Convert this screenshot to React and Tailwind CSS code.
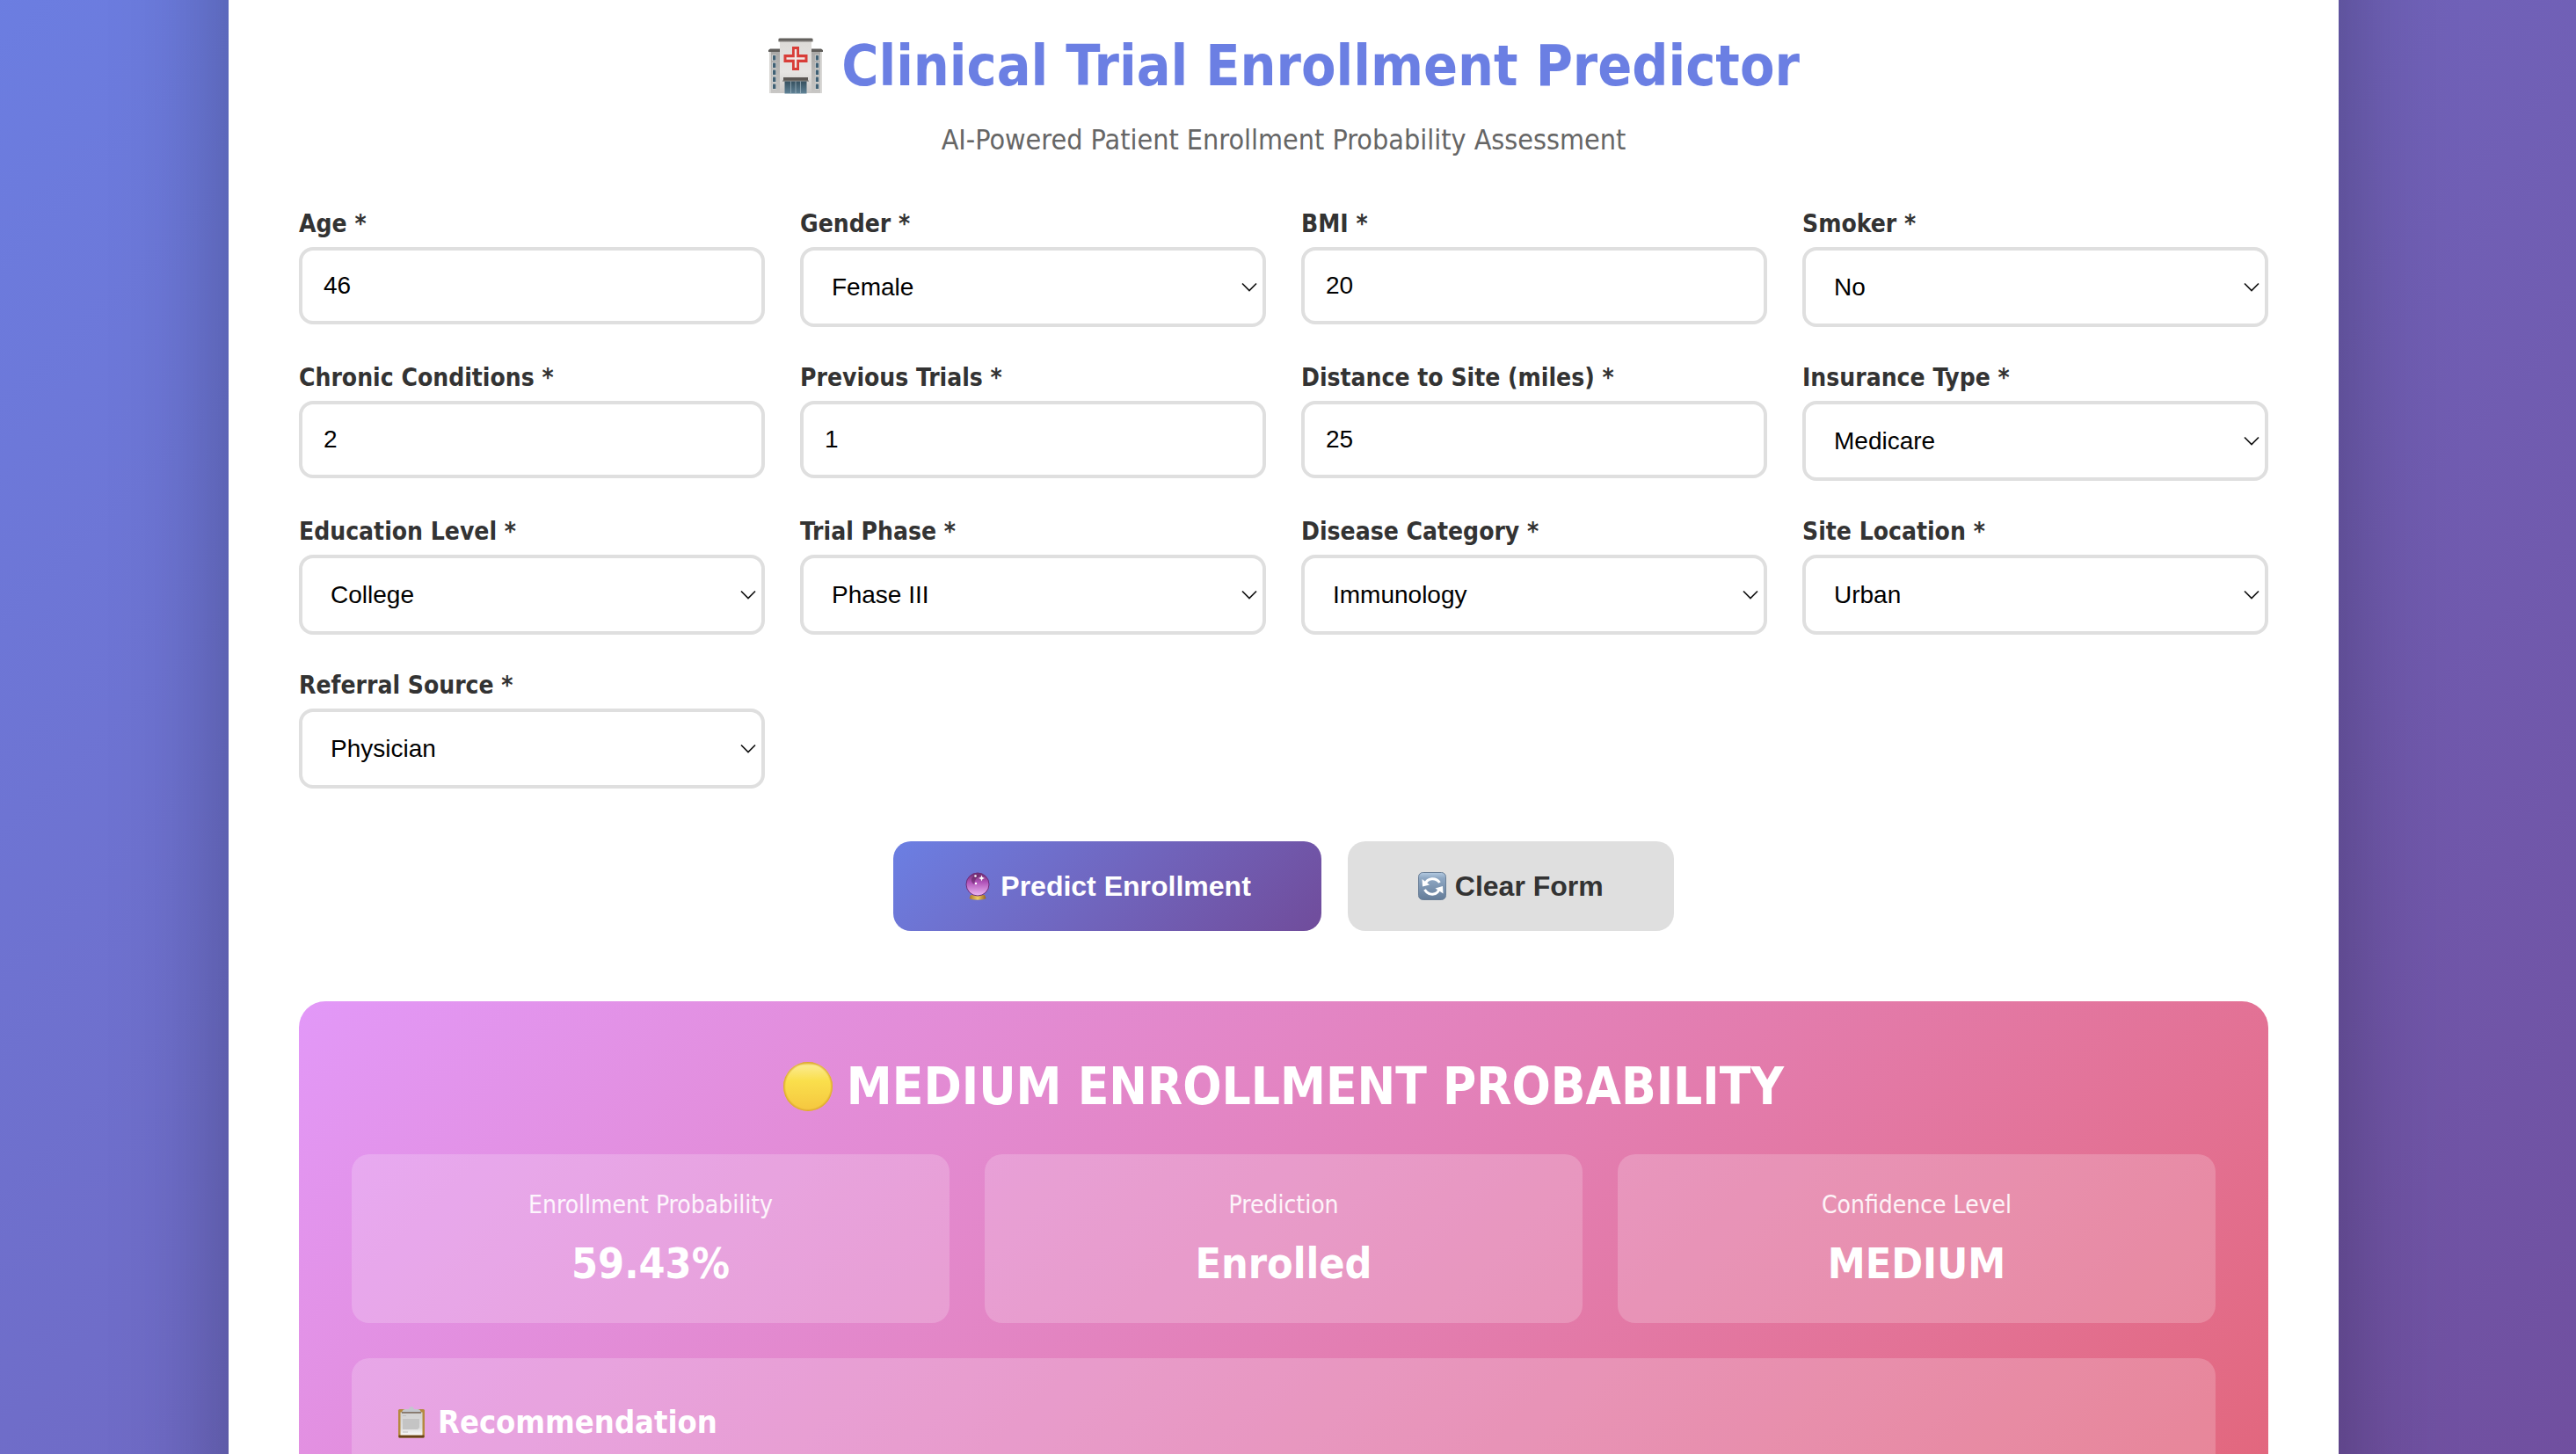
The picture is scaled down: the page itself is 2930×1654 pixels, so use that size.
import React from "react";

const fields = [
  { id: "age", label: "Age *", value: "46" },
  { id: "gender", label: "Gender *", options: ["Female", "Male"] },
  { id: "bmi", label: "BMI *", value: "20" },
  { id: "smoker", label: "Smoker *", options: ["No", "Yes"] },
  { id: "chronic", label: "Chronic Conditions *", value: "2" },
  { id: "previous", label: "Previous Trials *", value: "1" },
  { id: "distance", label: "Distance to Site (miles) *", value: "25" },
  { id: "insurance", label: "Insurance Type *", options: ["Medicare", "Medicaid", "Private"] },
  { id: "education", label: "Education Level *", options: ["College", "High School", "Graduate"] },
  { id: "phase", label: "Trial Phase *", options: ["Phase III", "Phase II", "Phase I"] },
  { id: "disease", label: "Disease Category *", options: ["Immunology", "Oncology", "Cardiology"] },
  { id: "site", label: "Site Location *", options: ["Urban", "Suburban", "Rural"] },
  { id: "referral", label: "Referral Source *", options: ["Physician", "Online", "Advertisement"] },
];

const stats = [
  { label: "Enrollment Probability", value: "59.43%" },
  { label: "Prediction", value: "Enrolled" },
  { label: "Confidence Level", value: "MEDIUM" },
];

function Hospital() {
  const rows = [18.5, 27, 35, 43, 51];
  return (
    <svg className="h-16 w-16 shrink-0" viewBox="0 0 64 64" aria-hidden="true">
      <defs>
        <linearGradient id="wall" x1="0" y1="0" x2="0" y2="1">
          <stop offset="0" stopColor="#dcdad7" />
          <stop offset="0.6" stopColor="#e6e4e2" />
          <stop offset="1" stopColor="#c9c7c5" />
        </linearGradient>
        <linearGradient id="wing" x1="0" y1="0" x2="0" y2="1">
          <stop offset="0" stopColor="#a9a8a6" />
          <stop offset="1" stopColor="#c8c7c5" />
        </linearGradient>
        <linearGradient id="pane" x1="0" y1="0" x2="0" y2="1">
          <stop offset="0" stopColor="#36505f" />
          <stop offset="1" stopColor="#5f8296" />
        </linearGradient>
      </defs>
      <path d="M2 15H14V63H2ZM50 15H62V63H50Z" fill="url(#wing)" />
      <path d="M2 16H4V63H2ZM60 16H62V63H60Z" fill="#d9d8d6" />
      <path d="M1 14L3 12.5H14V16H1ZM63 14L61 12.5H50V16H63Z" fill="#5f5d5a" />
      {rows.map((y) => (
        <g key={y}>
          <rect x="5" y={y + 1} width="5" height="6.6" fill="#dad9d7" />
          <rect x="6" y={y + 1.6} width="3.4" height="5.4" fill="#3f6074" />
          <rect x="54" y={y + 1} width="5" height="6.6" fill="#dad9d7" />
          <rect x="54.8" y={y + 1.6} width="3.4" height="5.4" fill="#3f6074" />
        </g>
      ))}
      <rect x="14" y="3" width="36" height="60" fill="url(#wall)" />
      <path d="M12.5 1L14 0.4H50L51.5 1V4H12.5Z" fill="#63605d" />
      <rect x="12.5" y="3.4" width="39" height="1.2" fill="#8d8a86" />
      <path d="M28 10H36V19H45.500V28H36V37H28V28H18.500V19H28Z" fill="#d83d38" />
      <path d="M30.800 13H33.200V22.200H42.500V24.800H33.200V34H30.800V24.800H21.500V22.200H30.800Z" fill="#f1e9e6" />
      <rect x="18" y="45" width="28" height="4" fill="#5c5855" />
      <rect x="17" y="48.500" width="30" height="1.200" fill="#84817e" />
      <rect x="19.500" y="49.500" width="25" height="14" fill="url(#pane)" />
      <path d="M26.500 49.500V63.500M32 49.500V63.500M37.500 49.500V63.500" stroke="#a9bcc6" strokeWidth="0.700" />
    </svg>
  );
}

function CrystalBall() {
  return (
    <svg className="h-8 w-8 shrink-0" viewBox="0 0 32 32" aria-hidden="true">
      <defs>
        <linearGradient id="orb" x1="0" y1="0" x2="0" y2="1">
          <stop offset="0" stopColor="#6d2c6c" />
          <stop offset="0.4" stopColor="#b052b8" />
          <stop offset="1" stopColor="#edb9f5" />
        </linearGradient>
        <linearGradient id="stand" x1="0" y1="0" x2="1" y2="0">
          <stop offset="0" stopColor="#a8742a" />
          <stop offset="0.5" stopColor="#f0cf62" />
          <stop offset="1" stopColor="#96621f" />
        </linearGradient>
      </defs>
      <path d="M8 26H24L25.500 30C22 32.300 10 32.300 6.500 30Z" fill="url(#stand)" />
      <circle cx="16" cy="14" r="13" fill="url(#orb)" stroke="#6c2a78" strokeWidth="1" />
      <path d="M9 8C11 4 16 2.500 19 4C14 6 13 10 12 14C10 13 8.500 11 9 8Z" fill="#4b1a4c" opacity="0.450" />
      <circle cx="13.500" cy="4.500" r="1.300" fill="#fff" />
      <path d="M20.500 3.500L21.500 6L24 7L21.500 8L20.500 10.500L19.500 8L17 7L19.500 6Z" fill="#fff" />
      <circle cx="14" cy="13" r="1.200" fill="#fff" />
    </svg>
  );
}

function Refresh() {
  return (
    <svg className="h-8 w-8 shrink-0" viewBox="0 0 32 32" aria-hidden="true">
      <defs>
        <linearGradient id="tile" x1="0" y1="0" x2="0" y2="1">
          <stop offset="0" stopColor="#b4cbe2" />
          <stop offset="0.200" stopColor="#8fa8c4" />
          <stop offset="1" stopColor="#647c98" />
        </linearGradient>
      </defs>
      <rect x="0.500" y="0.500" width="31" height="31" rx="5" fill="url(#tile)" stroke="#6a7f97" strokeWidth="1" />
      <path d="M8 13.500C10.500 6.500 20 5.500 24.500 12" fill="none" stroke="#fff" strokeWidth="3" />
      <path d="M4.500 8L5 16.500L13 14.500Z" fill="#fff" />
      <path d="M24 19.500C21.500 26.500 12 27.500 7.500 20" fill="none" stroke="#fff" strokeWidth="3" />
      <path d="M28.500 24.500L28 16L19.500 18.500Z" fill="#fff" />
    </svg>
  );
}

function YellowCircle() {
  return (
    <svg className="h-14 w-14 shrink-0" viewBox="0 0 56 56" aria-hidden="true">
      <defs>
        <linearGradient id="sun" x1="0" y1="0" x2="0" y2="1">
          <stop offset="0" stopColor="#e9bd3d" />
          <stop offset="0.080" stopColor="#fbea8c" />
          <stop offset="0.380" stopColor="#fadf4c" />
          <stop offset="1" stopColor="#f5c63f" />
        </linearGradient>
        <radialGradient id="rim">
          <stop offset="0.900" stopColor="#d9a22c" stopOpacity="0" />
          <stop offset="1" stopColor="#d9a22c" />
        </radialGradient>
      </defs>
      <circle cx="28" cy="28" r="28" fill="url(#sun)" />
      <circle cx="28" cy="28" r="28" fill="url(#rim)" />
    </svg>
  );
}

function Clipboard() {
  return (
    <svg className="h-9 w-9 shrink-0" viewBox="0 0 36 36" aria-hidden="true">
      <defs>
        <linearGradient id="sheet" x1="0" y1="0" x2="0" y2="1">
          <stop offset="0" stopColor="#d2d2d2" />
          <stop offset="0.700" stopColor="#dedede" />
          <stop offset="1" stopColor="#fafafa" />
        </linearGradient>
      </defs>
      <rect x="3" y="3" width="30" height="32.500" rx="1.500" fill="#b5893f" />
      <rect x="3.500" y="32.500" width="29" height="3" rx="1" fill="#674218" />
      <rect x="5.500" y="6.500" width="25" height="26" fill="url(#sheet)" />
      <path d="M8 14H27V24L25 26H8Z" fill="#c4c4c4" />
      <path d="M8 10.500H12M8 29H14" stroke="#c0c0c0" strokeWidth="1" />
      <path d="M8 4.500Q8.500 3 11 3H15Q16 0 18 0T21 3H25Q27.500 3 28 4.500L29 6.500H7Z" fill="#c3c7cd" />
      <rect x="7" y="6" width="22" height="1.800" fill="#84776b" />
    </svg>
  );
}

function Field({ field }) {
  return (
    <div className="flex flex-col gap-2">
      <label htmlFor={field.id} className="text-[28px] leading-9 font-bold text-[#333333]">
        {field.label}
      </label>
      {field.options ? (
        <div className="relative">
          <select
            id={field.id}
            defaultValue={field.options[0]}
            className="h-[91px] w-full appearance-none rounded-2xl border-4 border-[#dfdfdf] bg-white pr-12 pl-8 font-['Liberation_Sans',Arial,sans-serif] text-[28px] text-black"
          >
            {field.options.map((o) => (
              <option key={o}>{o}</option>
            ))}
          </select>
          <svg
            className="pointer-events-none absolute top-10 right-2.5 h-3 w-[18px]"
            viewBox="0 0 18 12"
            fill="none"
            stroke="#111"
            strokeWidth="1.7"
            aria-hidden="true"
          >
            <path d="M1 1.500L9 9.500L17 1.500" />
          </svg>
        </div>
      ) : (
        <input
          id={field.id}
          type="text"
          inputMode="numeric"
          defaultValue={field.value}
          className="h-[88px] w-full rounded-2xl border-4 border-[#dfdfdf] bg-white px-6 font-['Liberation_Sans',Arial,sans-serif] text-[28px] text-black"
        />
      )}
    </div>
  );
}

export default function App() {
  return (
    <div className="h-screen overflow-hidden bg-white font-['DejaVu_Sans_Condensed','DejaVu_Sans',sans-serif]">
      <div className="-mt-40 -mb-80 min-h-[calc(100vh+480px)] bg-linear-135 from-[#6b7fe3] to-[#704c9b] pr-2.5">
        <main className="mx-auto min-h-[calc(100vh+480px)] max-w-[2400px] bg-white px-20 pt-[195px] pb-20 shadow-[0_0_120px_rgba(0,0,0,0.3)]">
          <header className="flex flex-col items-center">
            <h1 className="flex items-center gap-5 text-[64px] leading-20 font-bold text-[#6b7fe3]">
              <Hospital />
              Clinical Trial Enrollment Predictor
            </h1>
            <p className="mt-6 text-[32px] leading-10 text-[#666666]">
              AI-Powered Patient Enrollment Probability Assessment
            </p>
          </header>

          <form onSubmit={(e) => e.preventDefault()}>
            <div className="mt-[58px] grid grid-cols-4 gap-10">
              {fields.map((f) => (
                <Field key={f.id} field={f} />
              ))}
            </div>
            <div className="mt-15 flex justify-center gap-[30px] font-['Liberation_Sans',Arial,sans-serif] text-[32px] leading-9 font-bold">
              <button
                type="submit"
                className="flex h-[102px] items-center gap-2.5 rounded-[20px] bg-linear-135 from-[#6b7fe3] to-[#704c9b] px-20 text-white"
              >
                <CrystalBall />
                Predict Enrollment
              </button>
              <button
                type="reset"
                className="flex h-[102px] items-center gap-2.5 rounded-[20px] bg-[#dfdfdf] px-20 text-[#333333]"
              >
                <Refresh />
                Clear Form
              </button>
            </div>
          </form>

          <section className="mt-20 rounded-[30px] bg-linear-135 from-[#e298f8] to-[#e26273] p-15 text-white">
            <h2 className="flex items-center justify-center gap-4 text-[58px] leading-[74px] font-bold">
              <YellowCircle />
              MEDIUM ENROLLMENT PROBABILITY
            </h2>
            <div className="mt-10 grid grid-cols-3 gap-10">
              {stats.map((s) => (
                <div key={s.label} className="rounded-[20px] bg-white/20 p-10 text-center">
                  <div className="text-[28px] leading-9 text-white/90">{s.label}</div>
                  <div className="mt-5 text-[48px] leading-14 font-bold">{s.value}</div>
                </div>
              ))}
            </div>
            <div className="mt-10 min-h-72 rounded-[20px] bg-white/20 p-[50px]">
              <h3 className="flex items-center gap-3 text-[36px] leading-[46px] font-bold">
                <Clipboard />
                Recommendation
              </h3>
            </div>
          </section>
        </main>
      </div>
    </div>
  );
}
